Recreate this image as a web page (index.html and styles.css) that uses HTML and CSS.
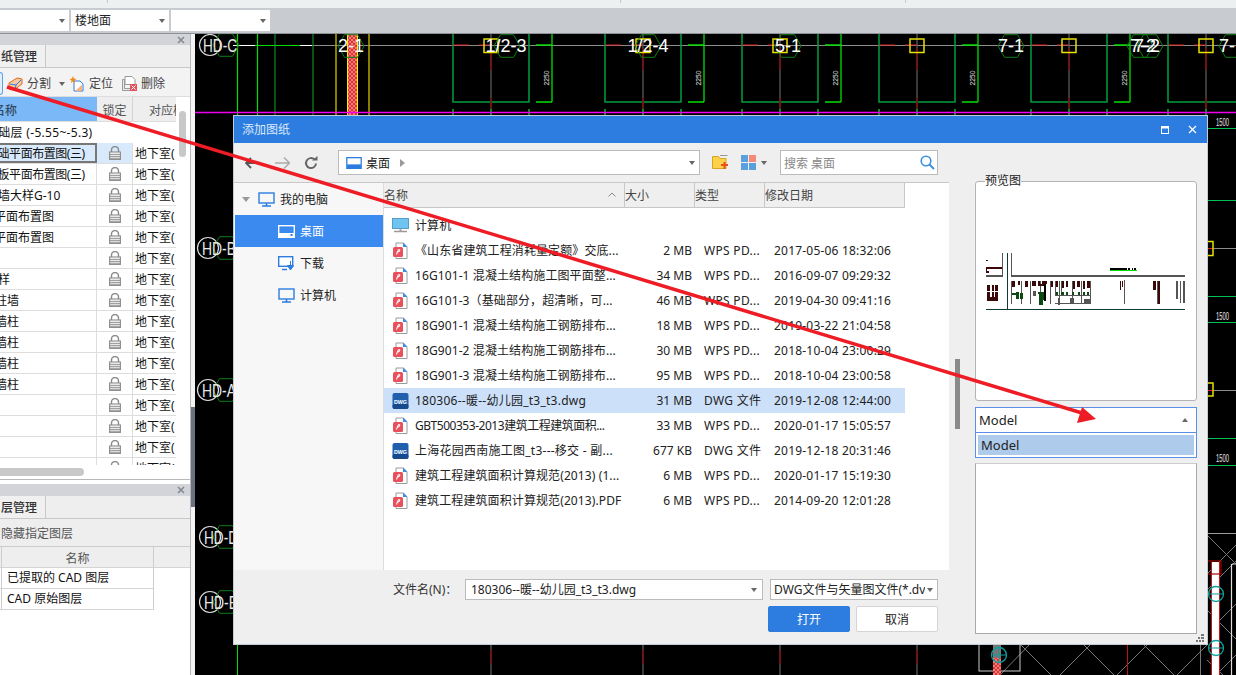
FILE: index.html
```html
<!DOCTYPE html>
<html lang="zh-CN">
<head>
<meta charset="utf-8">
<title>添加图纸</title>
<link rel="stylesheet" href="styles.css">
</head>
<body>
<svg class="defs" width="0" height="0" aria-hidden="true">
  <defs>
    <symbol id="lock" viewBox="0 0 12 14">
      <path d="M2.500 6V4a3.500 3.500 0 0 1 7 0v2" fill="none" stroke="#8a8a8a" stroke-width="1.400"/>
      <rect x=".6" y="6" width="10.800" height="7.400" fill="#fff" stroke="#8a8a8a" stroke-width="1.100"/>
      <path d="M1 8.300h10M1 10.300h10M1 12.200h10" stroke="#8a8a8a" stroke-width="1"/>
    </symbol>
    <symbol id="pdf" viewBox="0 0 16 18">
      <path d="M3.500 1h7.500l3.500 4v11.500h-11z" fill="#fff" stroke="#9a9a9a"/>
      <path d="M10.500 .5l4.500 4.500h-4.500z" fill="#3f8ee0"/>
      <rect x=".5" y="5" width="10" height="10" rx="1.500" fill="#e8505b"/>
      <path d="M4 12.500c1-3 1.500-5 2.500-5s1.500 2-2 3" fill="none" stroke="#fff" stroke-width="1.100"/>
    </symbol>
    <symbol id="dwg" viewBox="0 0 16 16">
      <rect width="16" height="16" rx="2" fill="#1f5fae"/>
      <rect y="11" width="16" height="5" rx="2" fill="#174a8c"/>
      <text x="8" y="10.500" class="dwg-text" text-anchor="middle" textLength="13" lengthAdjust="spacingAndGlyphs">DWG</text>
    </symbol>
    <symbol id="pc" viewBox="0 0 17 15">
      <rect x="1" y="1" width="15" height="10" fill="none" stroke="#2d7de0" stroke-width="1.400"/>
      <path d="M4 14h9M8.500 11v3" stroke="#2d7de0" stroke-width="1.600"/>
    </symbol>
    <symbol id="desk" viewBox="0 0 17 13">
      <rect x=".7" y=".7" width="15.600" height="11.600" fill="none" stroke="currentColor" stroke-width="1.400"/>
      <rect x="1" y="8" width="15" height="4" fill="currentColor"/>
      <rect class="desk-dot" x="12.500" y="9" width="2" height="2"/>
    </symbol>
    <polygon id="hex" points="13,0 6.500,11.300 -6.500,11.300 -13,0 -6.500,-11.300 6.500,-11.300" fill="none" stroke="#0b7d12" stroke-width="1"/>
    <rect id="ysq" x="-7" y="-7" width="14" height="13.500" fill="none" stroke="#e8e000" stroke-width="1.500"/>
    <pattern id="hatch" width="4" height="4" patternUnits="userSpaceOnUse">
      <rect width="4" height="4" fill="#e53030"/>
      <path d="M0 0l4 4M4 0l-4 4" stroke="#f0a0a0" stroke-width=".7"/>
    </pattern>
    <g id="bay">
      <rect x="0" y="-20" width="76" height="88" fill="none" stroke="#00a03c" stroke-width="1.500"/>
      <path d="M38 0v78" stroke="#5a5a5a" stroke-width="1.300"/>
      <path d="M38 14v22M38 64v14" stroke="#8a0000" stroke-width="1.300"/>
      <path d="M0 75v6M38 75v6M76 75v6" stroke="#0a8a20" stroke-width="2"/>
      <path d="M0 11h38" stroke="#e02020" stroke-width="1" stroke-dasharray="16 10"/>
    </g>
    <g id="dim">
      <path d="M0 -11v68M-16 57h16M-16 0h16" stroke="#00e000" stroke-width="1.300" fill="none"/>
      <text class="cad-dim-v" transform="translate(-3,33) rotate(-90)" text-anchor="middle" textLength="15" lengthAdjust="spacingAndGlyphs">2250</text>
    </g>
  </defs>
</svg>

<header class="top-strip"><span class="top-cut">构件图元</span><i class="tick t1"></i><i class="tick t2"></i><i class="tick t3"></i></header>
<div class="selects">
  <div class="sel s1"><span></span><i class="caret"></i></div>
  <div class="sel s2"><span>楼地面</span><i class="caret"></i></div>
  <div class="sel s3"><span></span><i class="caret"></i></div>
</div>

<div class="main">
  <aside class="side">
    <section class="panel panel-a">
      <div class="ptitle"><svg class="x-icon" width="8" height="8" viewBox="0 0 8 8"><path d="M1 1l6 6M7 1l-6 6" stroke="#85898f" stroke-width="1.600"/></svg></div>
      <div class="ptabs"><div class="ptab">纸管理</div></div>
      <div class="ptools">
        <span class="sel-edge"></span>
        <svg class="tool-ic" width="16" height="16" viewBox="0 0 16 16"><path d="M1 7l8-5 5 1v5l-8 6-5-1z" fill="#f7c9a0" stroke="#e06a1c"/><path d="M2 8l6 1 5-5M8 9l-1 5" fill="none" stroke="#2d7de0"/></svg>
        <span class="tool-t">分割</span><i class="caret tool-caret"></i>
        <svg class="tool-ic ic2" width="15" height="16" viewBox="0 0 15 16"><path d="M4 5h6l3 3v7H4z" fill="#fff" stroke="#2d7de0"/><path d="M5 15l7-6v6z" fill="#f7b27a"/><path d="M3 0l1 2.500 2.500 .5-2 1.500.5 2.500-2-1.500-2 1.500.5-2.500-2-1.500 2.500-.5z" fill="#f08a1d"/></svg>
        <span class="tool-t">定位</span>
        <svg class="tool-ic ic3" width="15" height="15" viewBox="0 0 15 15"><path d="M.5 3.500h2v9h8v2H.5z" fill="#e8e8e8" stroke="#9a9a9a"/><path d="M3 .5h7l3 3v5H3z" fill="#fff" stroke="#9a9a9a"/><rect x="8" y="8" width="7" height="7" fill="#e2525b"/><path d="M9.500 9.500l4 4M13.500 9.500l-4 4" stroke="#fff"/></svg>
        <span class="tool-t">删除</span>
      </div>
      <div class="dhead">
        <div class="dh name"><span class="n7">名称</span></div>
        <div class="dh lockh">锁定</div>
        <div class="dh corr">对应楼层</div>
      </div>
      <div class="dtable">
        <div class="drow plain"><div class="dname wide"><span class="n14 loose">基础层 (-5.55~-5.3)</span></div></div>
        <div class="drow on"><div class="dname"><span class="n14 tight">基础平面布置图(三)</span></div><div class="dlock"><svg width="12" height="14"><use href="#lock"/></svg></div><div class="dcorr">地下室(</div></div>
        <div class="drow"><div class="dname"><span class="n14 tight">底板平面布置图(三)</span></div><div class="dlock"><svg width="12" height="14"><use href="#lock"/></svg></div><div class="dcorr">地下室(</div></div>
        <div class="drow"><div class="dname"><span class="n14">剪墙大样G-10</span></div><div class="dlock"><svg width="12" height="14"><use href="#lock"/></svg></div><div class="dcorr">地下室(</div></div>
        <div class="drow"><div class="dname"><span class="n6">平面布置图</span></div><div class="dlock"><svg width="12" height="14"><use href="#lock"/></svg></div><div class="dcorr">地下室(</div></div>
        <div class="drow"><div class="dname"><span class="n6">平面布置图</span></div><div class="dlock"><svg width="12" height="14"><use href="#lock"/></svg></div><div class="dcorr">地下室(</div></div>
        <div class="drow"><div class="dname"></div><div class="dlock"><svg width="12" height="14"><use href="#lock"/></svg></div><div class="dcorr">地下室(</div></div>
        <div class="drow"><div class="dname"><span class="n14">大样</span></div><div class="dlock"><svg width="12" height="14"><use href="#lock"/></svg></div><div class="dcorr">地下室(</div></div>
        <div class="drow"><div class="dname"><span class="n5">柱墙</span></div><div class="dlock"><svg width="12" height="14"><use href="#lock"/></svg></div><div class="dcorr">地下室(</div></div>
        <div class="drow"><div class="dname"><span class="n5">墙柱</span></div><div class="dlock"><svg width="12" height="14"><use href="#lock"/></svg></div><div class="dcorr">地下室(</div></div>
        <div class="drow"><div class="dname"><span class="n5">墙柱</span></div><div class="dlock"><svg width="12" height="14"><use href="#lock"/></svg></div><div class="dcorr">地下室(</div></div>
        <div class="drow"><div class="dname"><span class="n5">墙柱</span></div><div class="dlock"><svg width="12" height="14"><use href="#lock"/></svg></div><div class="dcorr">地下室(</div></div>
        <div class="drow"><div class="dname"><span class="n5">墙柱</span></div><div class="dlock"><svg width="12" height="14"><use href="#lock"/></svg></div><div class="dcorr">地下室(</div></div>
        <div class="drow"><div class="dname"></div><div class="dlock"><svg width="12" height="14"><use href="#lock"/></svg></div><div class="dcorr">地下室(</div></div>
        <div class="drow"><div class="dname"></div><div class="dlock"><svg width="12" height="14"><use href="#lock"/></svg></div><div class="dcorr">地下室(</div></div>
        <div class="drow"><div class="dname"></div><div class="dlock"><svg width="12" height="14"><use href="#lock"/></svg></div><div class="dcorr">地下室(</div></div>
        <div class="drow"><div class="dname"></div><div class="dlock"><svg width="12" height="14"><use href="#lock"/></svg></div><div class="dcorr">地下室(</div></div>
      </div>
      <div class="vthumb"></div>
      <div class="hscroll"><div class="hthumb"></div></div>
    </section>
    <section class="panel panel-b">
      <div class="ptitle tall"><svg class="x-icon" width="8" height="8" viewBox="0 0 8 8"><path d="M1 1l6 6M7 1l-6 6" stroke="#85898f" stroke-width="1.600"/></svg></div>
      <div class="ptabs"><div class="ptab">层管理</div></div>
      <div class="ptools2">隐藏指定图层</div>
      <div class="lhead"><div class="lgut"></div><div class="lname">名称</div></div>
      <div class="lrow"><div class="lgut"></div><div class="lcell">已提取的 CAD 图层</div></div>
      <div class="lrow"><div class="lgut"></div><div class="lcell">CAD 原始图层</div></div>
    </section>
  </aside>
  <div class="gutter"><div class="gutter-dark"></div></div>
  <div class="canvas">
    <svg class="cad" width="1041" height="641" viewBox="195 34 1041 641">
      <rect x="195" y="33" width="1041" height="642" fill="#000"/>
      <path d="M300 45.500H1236" stroke="#8c8c8c"/>
      <path d="M233 45.500h22M300 45.500h12" stroke="#fff" stroke-width="1.200"/>
      <path d="M255 45.500h45" stroke="#00e000"/>
      <path d="M237.500 34v82M257.500 34v82" stroke="#00e000" stroke-width="1.200"/>
      <path d="M275 34v82M313 34v82" stroke="#0a8a20" stroke-width="1.200"/>
      <path d="M336 34v82M369 34v82" stroke="#b8a800" stroke-width="1.500"/>
      <rect x="348" y="34" width="9" height="82" fill="url(#hatch)"/>
      <path d="M347.500 34v82M357.500 34v82" stroke="#fff000" stroke-width="1"/>
      <use href="#bay" x="453" y="34"/><use href="#bay" x="605" y="34"/>
      <use href="#bay" x="742" y="34"/><use href="#bay" x="879" y="34"/>
      <use href="#bay" x="1031" y="34"/><use href="#bay" x="1168" y="34"/>
      <use href="#dim" x="552" y="45"/><use href="#dim" x="704" y="45"/>
      <use href="#dim" x="841" y="45"/><use href="#dim" x="978" y="45"/><use href="#dim" x="1130" y="45"/>
      <path d="M195 112.500H1236" stroke="#f000f0" stroke-width="1.300"/>

      <use href="#ysq" x="491" y="46"/><use href="#ysq" x="643" y="46"/>
      <use href="#ysq" x="780" y="46"/><use href="#ysq" x="917" y="46"/>
      <use href="#ysq" x="1069" y="46"/><use href="#ysq" x="1206" y="46"/>
      <use href="#hex" x="351" y="46"/><use href="#hex" x="507" y="46"/><use href="#hex" x="648" y="46"/>
      <use href="#hex" x="788" y="46"/><use href="#hex" x="1011" y="46"/>
      <use href="#hex" x="1140" y="46"/><use href="#hex" x="1150" y="46"/><use href="#hex" x="1232" y="46"/>
      <text class="cad-label" x="351" y="52" text-anchor="middle">2-1</text>
      <text class="cad-label" x="506" y="52" text-anchor="middle">1/2-3</text>
      <text class="cad-label" x="648" y="52" text-anchor="middle">1/2-4</text>
      <text class="cad-label" x="788" y="52" text-anchor="middle">5-1</text>
      <text class="cad-label" x="1011" y="52" text-anchor="middle">7-1</text>
      <text class="cad-label" x="1143" y="52" text-anchor="middle">7-2</text>
      <text class="cad-label" x="1147" y="52" text-anchor="middle">7-2</text>
      <text class="cad-label" x="1219" y="52">7-</text>

      <circle cx="210" cy="45" r="10.500" fill="none" stroke="#ddd" stroke-width="1.200"/><use href="#hex" x="226" y="45"/>
      <text class="cad-axis" x="203" y="52" textLength="34" lengthAdjust="spacingAndGlyphs">HD-C</text>
      <circle cx="208" cy="248" r="10.500" fill="none" stroke="#ddd" stroke-width="1.200"/><use href="#hex" x="226" y="248"/>
      <text class="cad-axis" x="202" y="255" textLength="34" lengthAdjust="spacingAndGlyphs">HD-B</text>
      <circle cx="208" cy="390" r="10.500" fill="none" stroke="#ddd" stroke-width="1.200"/><use href="#hex" x="226" y="390"/>
      <text class="cad-axis" x="202" y="397" textLength="34" lengthAdjust="spacingAndGlyphs">HD-A</text>
      <circle cx="210" cy="537" r="10.500" fill="none" stroke="#ddd" stroke-width="1.200"/><use href="#hex" x="226" y="537"/>
      <text class="cad-axis" x="204" y="544" textLength="34" lengthAdjust="spacingAndGlyphs">HD-D</text>
      <circle cx="210" cy="602" r="10.500" fill="none" stroke="#ddd" stroke-width="1.200"/><use href="#hex" x="226" y="602"/>
      <text class="cad-axis" x="204" y="609" textLength="34" lengthAdjust="spacingAndGlyphs">HD-E</text>
      <path d="M237.500 640v35" stroke="#00e000"/>

      <path d="M491 640v35M643 640v35M780 640v35M917 640v35" stroke="#5a5a5a" stroke-width="1.300"/>
      <path d="M491 650v14M643 650v14M780 650v14M917 650v14" stroke="#8a0000" stroke-width="1.300"/>

      <path d="M1207 128.500h29M1207 200.500h29M1207 296.500h29M1207 322.500h29M1207 438.500h29M1207 465.500h29" stroke="#00c050" stroke-width="1.200"/>
      <text class="cad-dim" x="1216" y="126" textLength="13" lengthAdjust="spacingAndGlyphs">1500</text>
      <text class="cad-dim" x="1216" y="320" textLength="13" lengthAdjust="spacingAndGlyphs">1500</text>
      <text class="cad-dim" x="1216" y="462" textLength="13" lengthAdjust="spacingAndGlyphs">1500</text>
      <path d="M1207 248.500h29M1207 390.500h29" stroke="#8c8c8c"/>
      <path d="M1207 248.500h7M1207 390.500h7" stroke="#e02020"/>
      <rect x="1200" y="241.500" width="13" height="14" fill="none" stroke="#e8e000" stroke-width="1.500"/>
      <rect x="1200" y="383" width="13" height="13" fill="none" stroke="#e8e000" stroke-width="1.500"/>
      <path d="M1207 533.500h29" stroke="#9a9a9a"/>
      <path d="M1207 535l29 29M1236 545l-29 29M1207 590l29-29M1220 620l16-16M1207 610l29 29M1207 660l16 15M1236 655l-20 20" stroke="#777"/>
      <path d="M1000 675l30-31M1020 644l31 31M1060 675l31-31M1083 644l31 31M1117 675l31-31M1143 644l31 31M1177 675l30-30" stroke="#777"/>
      <path d="M1127.500 644v31" stroke="#c01010"/>
      <path d="M1200.500 644v31" stroke="#777"/>
      <rect x="979" y="640" width="41" height="31" fill="none" stroke="#ccc"/>
      <rect x="993" y="640" width="8" height="35" fill="#777"/>
      <rect x="993" y="658" width="8" height="17" fill="url(#hatch)"/>
      <circle cx="999" cy="655" r="7.500" fill="none" stroke="#10a0a0" stroke-width="1.300"/>
      <path d="M991.500 655h15M999 647.500v15" stroke="#10a0a0"/>
      <rect x="1212" y="562" width="7" height="113" fill="#fff"/>
      <path d="M1211.500 562v113M1219.500 562v113" stroke="#d01010" stroke-width="1"/>
      <rect x="1207" y="561" width="14" height="13" fill="none" stroke="#a00000" stroke-width="1.200"/>
      <path d="M1232 564h4M1231.500 564v111" stroke="#ddd" stroke-width="1.200"/>
      <circle cx="1216" cy="594" r="7.500" fill="none" stroke="#10a0a0" stroke-width="1.300"/>
      <path d="M1208.500 594h15" stroke="#10a0a0"/>
      <circle cx="1216" cy="648" r="7.500" fill="none" stroke="#10a0a0" stroke-width="1.300"/>
      <path d="M1208.500 648h15" stroke="#10a0a0"/>
    </svg>
  </div>
</div>

<div class="dialog">
  <div class="dlg-title">
    <span class="dlg-name">添加图纸</span>
    <svg class="dlg-max" width="8" height="8" viewBox="0 0 8 8"><rect x=".5" y=".5" width="7" height="7" fill="none" stroke="#fff"/><path d="M0 1.500h8" stroke="#fff" stroke-width="2"/></svg>
    <svg class="dlg-close" width="9" height="9" viewBox="0 0 9 9"><path d="M1 1l7 7M8 1l-7 7" stroke="#fff" stroke-width="1.300"/></svg>
  </div>
  <div class="dlg-body">
    <div class="dlg-main">
      <div class="nav">
        <svg class="nav-back" width="12" height="12" viewBox="0 0 12 12"><path d="M6 1L1 6l5 5M1 6h11" fill="none" stroke="#555" stroke-width="1.800"/></svg>
        <svg class="nav-fwd" width="15" height="12" viewBox="0 0 15 12"><path d="M9 .5L14.500 6 9 11.500M0 6h14" fill="none" stroke="#aaa" stroke-width="1.500"/></svg>
        <svg class="nav-ref" width="14" height="14" viewBox="0 0 14 14"><path d="M12 7.500A5 5 0 1 1 10.500 3.500" fill="none" stroke="#666" stroke-width="2"/><path d="M8 4.500h5.500V0z" fill="#666"/></svg>
        <div class="addr">
          <svg class="addr-ic" width="16" height="12"><use href="#desk"/></svg>
          <span>桌面</span><i class="tri-r"></i><i class="caret addr-caret"></i>
        </div>
        <svg class="nf" width="16" height="15" viewBox="0 0 16 15"><path d="M.5 1.500h6l1.500 2h6v10H.5z" fill="#fbd24a" stroke="#d9a520"/><path d="M8 .5h7.500" stroke="#999"/><path d="M9 10h7M12.500 7v7" stroke="#e8501c" stroke-width="2"/></svg>
        <svg class="vw" width="15" height="15" viewBox="0 0 15 15"><rect width="7" height="7" fill="#5aa0dc"/><rect x="8" width="7" height="7" fill="#f48a78"/><rect y="8" width="7" height="7" fill="#5aa0dc"/><rect x="8" y="8" width="7" height="7" fill="#5aa0dc"/></svg>
        <i class="caret vw-caret"></i>
        <div class="search"><span>搜索 桌面</span>
          <svg width="15" height="15" viewBox="0 0 15 15"><circle cx="6" cy="6" r="4.800" fill="none" stroke="#3f8ee0" stroke-width="1.600"/><path d="M9.500 9.500l4.500 4.500" stroke="#3f8ee0" stroke-width="2"/></svg>
        </div>
      </div>
      <div class="browse">
        <nav class="tree">
          <div class="tree-row root"><i class="caret tree-caret"></i><svg class="tree-ic" width="17" height="15"><use href="#pc"/></svg><span>我的电脑</span></div>
          <div class="tree-row sub cur"><svg class="tree-ic" width="17" height="13"><use href="#desk"/></svg><span>桌面</span></div>
          <div class="tree-row sub"><svg class="tree-ic" width="17" height="15" viewBox="0 0 17 15"><rect x=".7" y=".7" width="14" height="9.600" fill="#fff" stroke="#2d7de0" stroke-width="1.400"/><path d="M4 13.500h5" stroke="#2d7de0" stroke-width="1.500"/><path d="M12.500 5v5M9.500 9.500h6L12.500 14z" fill="#2d7de0" stroke="#2d7de0"/></svg><span>下载</span></div>
          <div class="tree-row sub"><svg class="tree-ic" width="17" height="15"><use href="#pc"/></svg><span>计算机</span></div>
        </nav>
        <div class="files">
          <div class="fhead">
            <div class="fh c-name">名称<svg class="sort" width="8" height="5" viewBox="0 0 8 5"><path d="M.5 4.500L4 1l3.500 3.500" fill="none" stroke="#888"/></svg></div>
            <div class="fh c-size">大小</div>
            <div class="fh c-type">类型</div>
            <div class="fh c-date">修改日期</div>
          </div>
          <div class="flist">
            <div class="frow"><svg class="fic" width="17" height="15" viewBox="0 0 17 15"><rect x=".5" y=".5" width="16" height="10" fill="#6fc4f2" stroke="#5a9cc8"/><path d="M8.500 11v2" stroke="#aaa" stroke-width="2"/><path d="M2 13.500h13" stroke="#9a9a9a" stroke-width="1.500"/></svg><span class="f-name">计算机</span></div>
            <div class="frow"><svg class="fic" width="16" height="18"><use href="#pdf"/></svg><span class="f-name">《山东省建筑工程消耗量定额》交底...</span><span class="f-size">2 MB</span><span class="f-type">WPS PD...</span><span class="f-date">2017-05-06 18:32:06</span></div>
            <div class="frow"><svg class="fic" width="16" height="18"><use href="#pdf"/></svg><span class="f-name">16G101-1 混凝土结构施工图平面整...</span><span class="f-size">34 MB</span><span class="f-type">WPS PD...</span><span class="f-date">2016-09-07 09:29:32</span></div>
            <div class="frow"><svg class="fic" width="16" height="18"><use href="#pdf"/></svg><span class="f-name">16G101-3（基础部分，超清晰，可...</span><span class="f-size">46 MB</span><span class="f-type">WPS PD...</span><span class="f-date">2019-04-30 09:41:16</span></div>
            <div class="frow"><svg class="fic" width="16" height="18"><use href="#pdf"/></svg><span class="f-name">18G901-1 混凝土结构施工钢筋排布...</span><span class="f-size">18 MB</span><span class="f-type">WPS PD...</span><span class="f-date">2019-03-22 21:04:58</span></div>
            <div class="frow"><svg class="fic" width="16" height="18"><use href="#pdf"/></svg><span class="f-name">18G901-2 混凝土结构施工钢筋排布...</span><span class="f-size">30 MB</span><span class="f-type">WPS PD...</span><span class="f-date">2018-10-04 23:00:29</span></div>
            <div class="frow"><svg class="fic" width="16" height="18"><use href="#pdf"/></svg><span class="f-name">18G901-3 混凝土结构施工钢筋排布...</span><span class="f-size">95 MB</span><span class="f-type">WPS PD...</span><span class="f-date">2018-10-04 23:00:58</span></div>
            <div class="frow sel-row"><svg class="fic" width="16" height="16"><use href="#dwg"/></svg><span class="f-name wider">180306--暖--幼儿园_t3_t3.dwg</span><span class="f-size">31 MB</span><span class="f-type">DWG 文件</span><span class="f-date">2019-12-08 12:44:00</span></div>
            <div class="frow"><svg class="fic" width="16" height="18"><use href="#pdf"/></svg><span class="f-name narrower">GBT500353-2013建筑工程建筑面积...</span><span class="f-size">33 MB</span><span class="f-type">WPS PD...</span><span class="f-date">2020-01-17 15:05:57</span></div>
            <div class="frow"><svg class="fic" width="16" height="16"><use href="#dwg"/></svg><span class="f-name wider">上海花园西南施工图_t3---移交 - 副...</span><span class="f-size">677 KB</span><span class="f-type">DWG 文件</span><span class="f-date">2019-12-18 20:31:46</span></div>
            <div class="frow"><svg class="fic" width="16" height="18"><use href="#pdf"/></svg><span class="f-name">建筑工程建筑面积计算规范(2013) (1...</span><span class="f-size">6 MB</span><span class="f-type">WPS PD...</span><span class="f-date">2020-01-17 15:19:30</span></div>
            <div class="frow"><svg class="fic" width="16" height="18"><use href="#pdf"/></svg><span class="f-name">建筑工程建筑面积计算规范(2013).PDF</span><span class="f-size">6 MB</span><span class="f-type">WPS PD...</span><span class="f-date">2014-09-20 12:01:28</span></div>
          </div>
        </div>
      </div>
      <div class="dlg-bottom">
        <div class="b-row">
          <label class="b-label">文件名(N)：</label>
          <div class="b-input"><span>180306--暖--幼儿园_t3_t3.dwg</span><i class="caret"></i></div>
          <div class="b-filter"><span>DWG文件与矢量图文件(*.dv</span><i class="caret"></i></div>
        </div>
        <div class="b-actions">
          <button class="btn primary">打开</button>
          <button class="btn">取消</button>
        </div>
      </div>
    </div>
    <div class="splitter"><div class="handle"></div></div>
    <div class="dlg-right">
      <div class="preview">
        <span class="legend">预览图</span>
        <svg class="pv" width="220" height="218" viewBox="976 182 220 218">
          <g class="pv-gray">
            <rect x="1011" y="275" width="174" height="2"/><rect x="986" y="275" width="17" height="2"/>
            <rect x="1002" y="253" width="1" height="24"/><rect x="1011" y="253" width="1" height="24"/>
            <rect x="1011" y="281" width="1" height="23"/><rect x="1021" y="281" width="1" height="23"/><rect x="1030" y="281" width="1" height="23"/><rect x="1040" y="281" width="1" height="23"/><rect x="1050" y="281" width="1" height="23"/><rect x="1059" y="281" width="1" height="23"/>
            <rect x="1055" y="281" width="1" height="14"/><rect x="1061" y="281" width="1" height="14"/><rect x="1055" y="295" width="35" height="1"/><rect x="1055" y="303" width="35" height="1"/><rect x="1072" y="281" width="1" height="23"/><rect x="1081" y="281" width="1" height="23"/><rect x="1090" y="281" width="1" height="23"/><rect x="1084" y="299" width="7" height="4"/><rect x="1058" y="298" width="2" height="7"/><rect x="1070" y="298" width="4" height="5"/>
            <rect x="1124" y="280" width="1" height="24"/><rect x="1157" y="281" width="1" height="23"/><rect x="1176" y="281" width="2" height="18"/><rect x="1180" y="281" width="1" height="22"/><rect x="1183" y="281" width="2" height="22"/>
            <rect x="1033" y="291" width="3" height="5"/>
          </g>
          <g class="pv-teal"><rect x="1007" y="253" width="1" height="57"/><rect x="986" y="309" width="199" height="1"/></g>
          <g class="pv-red">
            <rect x="986" y="267" width="16" height="2"/><rect x="986" y="267" width="1" height="6"/><rect x="986" y="271" width="3" height="2"/><rect x="986" y="260" width="2" height="1"/>
            <rect x="987" y="285" width="11" height="16"/>
            <rect x="1012" y="281" width="3" height="6"/><rect x="1018" y="281" width="2" height="4"/><rect x="1025" y="281" width="3" height="6"/><rect x="1032" y="281" width="4" height="5"/><rect x="1038" y="281" width="2" height="5"/><rect x="1042" y="281" width="5" height="3"/><rect x="1038" y="284" width="7" height="2"/>
            <rect x="1051" y="281" width="2" height="6"/><rect x="1056" y="281" width="2" height="6"/><rect x="1062" y="281" width="2" height="7"/><rect x="1066" y="281" width="2" height="6"/><rect x="1073" y="281" width="2" height="8"/><rect x="1077" y="281" width="3" height="6"/><rect x="1083" y="281" width="2" height="8"/><rect x="1087" y="281" width="3" height="7"/>
            <rect x="1120" y="281" width="1" height="9"/><rect x="1122" y="281" width="1" height="6"/><rect x="1153" y="281" width="3" height="9"/><rect x="1158" y="281" width="2" height="23"/>
          </g>
          <rect class="pv-w" x="990" y="284" width="2" height="13"/><rect class="pv-w" x="994" y="284" width="1" height="13"/><rect class="pv-w" x="987" y="291" width="11" height="1"/>
          <g class="pv-green">
            <rect x="1012" y="293" width="5" height="2"/><rect x="1016" y="292" width="3" height="7"/><rect x="1020" y="293" width="3" height="6"/><rect x="1039" y="292" width="4" height="13"/><rect x="1042" y="292" width="2" height="8"/><rect x="1038" y="292" width="2" height="2"/>
            <rect x="1056" y="292" width="2" height="3"/><rect x="1061" y="292" width="3" height="3"/><rect x="1066" y="292" width="2" height="3"/><rect x="1072" y="292" width="2" height="3"/><rect x="1078" y="292" width="2" height="3"/><rect x="1083" y="292" width="2" height="3"/><rect x="1087" y="292" width="2" height="3"/>
          </g>
          <rect class="pv-k" x="1044" y="284" width="2" height="17"/><rect class="pv-k" x="1110" y="268" width="17" height="2"/><rect class="pv-k" x="1128" y="268" width="2" height="2"/><rect class="pv-k" x="1132" y="268" width="1" height="2"/><rect class="pv-k" x="1134" y="268" width="2" height="2"/>
          <rect class="pv-lime" x="1110" y="270" width="27" height="1"/>
        </svg>
      </div>
      <div class="m-select"><span>Model</span><i class="caret up"></i></div>
      <div class="m-drop"><div class="m-item">Model</div></div>
      <div class="m-area"></div>
      <svg class="grip" width="8" height="8" viewBox="0 0 8 8"><path d="M5 0h3v2H5zM2 3h2v2H2zM5 3h3v2H5zM0 6h2v2H0zM3 6h2v2H3zM6 6h2v2H6z" fill="#777"/></svg>
    </div>
  </div>
</div>

<svg class="arrow" width="1236" height="675" viewBox="0 0 1236 675">
  <path class="arrow-line" d="M7 87L1082 413"/>
  <polygon class="arrow-head" points="1096,419 1082,407 1077,423"/>
</svg>
</body>
</html>
```

FILE: styles.css
```css
* { box-sizing: border-box; }
html, body { margin: 0; padding: 0; }
body {
  position: relative;
  width: 1236px;
  height: 675px;
  overflow: hidden;
  background: #000;
  color: #222;
  font: 12px/16px "Noto Sans", "Noto Sans CJK SC", sans-serif;
}
i { display: block; font-style: normal; }
.defs { position: absolute; }

.top-strip { position: relative; height: 8px; background: #ecf0f1; overflow: hidden; }
.top-cut { display: block; margin: -13px 0 0 784px; color: #222; letter-spacing: 8px; font-weight: 700; }
.tick { position: absolute; top: 0; width: 1px; height: 3px; background: #c8c8c8; }
.t1 { left: 107px; } .t2 { left: 620px; } .t3 { left: 905px; }

.selects { display: flex; height: 26px; padding: 2px 0 2px 0; background: #c8ccd0; border-bottom: 1px solid #8e9296; gap: 2px; }
.sel { display: flex; align-items: center; justify-content: space-between; height: 21px; background: #fff; padding: 0 4px 0 4px; }
.s1 { width: 69px; } .s2 { width: 98px; } .s3 { width: 99px; }
.caret { width: 0; height: 0; border: 3px solid transparent; border-top: 4px solid #666; border-bottom: 0; flex: none; }
.caret.up { border-top: 0; border-bottom: 4px solid #666; }

.main { display: flex; height: 641px; }
.side { width: 191px; background: #fff; border-right: 1px solid #b4b8bc; flex: none; }
.gutter { width: 4px; background: #f4f4f4; position: relative; flex: none; }
.gutter-dark { position: absolute; left: 0; top: 373px; width: 4px; height: 100px; background: #6a7280; }
.canvas { flex: 1; overflow: hidden; }
.cad { display: block; }
.cad-label { fill: #fff; font: 18px "Liberation Sans", sans-serif; }
.cad-axis { fill: #e8e8e8; font: 18px "Liberation Sans", sans-serif; }
.cad-dim { fill: #e8e8e8; font: 10px "Liberation Sans", sans-serif; }
.cad-dim-v { fill: #e8e8e8; font: 8px "Liberation Sans", sans-serif; }
.dwg-text { fill: #fff; font: 700 6px "Liberation Sans", sans-serif; }
.desk-dot { fill: #2d7de0; }

.panel-a { position: relative; height: 446px; border-bottom: 1px solid #b8b8b8; margin-bottom: 4px; }
.ptitle { height: 11px; background: #d2d4da; display: flex; justify-content: flex-end; align-items: center; padding-right: 5px; }
.ptitle.tall { height: 12px; }
.ptabs { height: 23px; background: #eee; border-bottom: 1px solid #c8c8c8; }
.ptab { width: 46px; height: 22px; padding-left: 1px; line-height: 24px; font-weight: 500; color: #333; border-right: 1px solid #c8c8c8; background: #f0f0f0; overflow: hidden; }
.ptools { display: flex; align-items: center; height: 29px; padding-top: 3px; background: #f3f3f3; border-bottom: 1px solid #ddd; color: #444; }
.sel-edge { width: 3px; height: 23px; background: #e0effc; border: 1px solid #5ba2e6; border-left: 0; border-radius: 0 3px 3px 0; margin-right: 5px; }
.tool-ic { flex: none; }
.tool-t { margin-left: 3px; }
.ic2 + .tool-t, .ic3 + .tool-t { margin-left: 4px; }
.tool-caret { margin: 0 5px 0 8px; }
.ic3 { margin-left: 9px; }

.dhead { display: flex; height: 25px; background: #eee; border-bottom: 1px solid #ddd; width: 176px; }
.dh { line-height: 27px; border-right: 1px solid #d4d4d4; color: #555; text-align: center; overflow: hidden; white-space: nowrap; }
.dh.name { width: 97px; background: #7ab8f7; text-align: left; border-right: 0; color: #33475c; font-weight: 500; }
.dh.lockh { width: 36px; }
.dh.corr { width: 43px; text-align: left; padding-left: 16px; border-right: 0; }
.n7 { margin-left: -7px; display: inline-block; }
.n14 { margin-left: -14px; display: inline-block; }
.n6 { margin-left: -6px; display: inline-block; }
.n5 { margin-left: -5px; display: inline-block; }
.tight { letter-spacing: -.45px; }
.loose { letter-spacing: .3px; }

.dtable { height: 343px; overflow: hidden; }
.drow { display: flex; height: 21px; width: 176px; border-bottom: 1px solid #ddd; line-height: 22px; white-space: nowrap; color: #111; }
.drow.plain { border-bottom: 0; }
.dname { width: 97px; overflow: hidden; border-right: 1px solid #ddd; flex: none; }
.dname.wide { width: 176px; border-right: 0; }
.dlock { width: 36px; border-right: 1px solid #ddd; display: flex; align-items: center; justify-content: center; flex: none; }
.dcorr { width: 43px; padding-left: 2px; overflow: hidden; flex: none; }
.drow.on .dname { border: 2px solid #777; border-left: 0; background: #d8e9fb; line-height: 18px; }
.drow.on .dlock { background: #d8e9fb; }
.vthumb { position: absolute; left: 179px; top: 77px; width: 7px; height: 46px; background: #c8c8c8; border-radius: 4px; }
.hscroll { height: 13px; padding-top: 3px; }
.hthumb { width: 84px; height: 8px; background: #c8c8c8; border-radius: 0 4px 4px 0; }

.ptools2 { height: 28px; line-height: 30px; padding-left: 1px; background: #eee; border-bottom: 1px solid #ccc; color: #555; }
.lhead { display: flex; height: 21px; background: #eee; border-bottom: 1px solid #d4d4d4; }
.lgut { width: 2px; border-right: 1px solid #ccc; flex: none; }
.lname { width: 152px; text-align: center; line-height: 23px; color: #555; border-right: 1px solid #ccc; }
.lrow { display: flex; height: 21px; width: 154px; border-bottom: 1px solid #d4d4d4; }
.lcell { flex: 1; padding-left: 5px; line-height: 20px; border-right: 1px solid #ccc; color: #111; white-space: nowrap; }

.dialog {
  position: absolute; left: 234px; top: 116px; width: 973px; height: 528px;
  background: #efefef; box-shadow: 0 0 0 1px #c5ccd6;
}
.dlg-title { display: flex; align-items: center; height: 27px; background: #2d7de0; color: #dbe9fb; padding-left: 8px; }
.dlg-name { flex: 1; padding-top: 1px; }
.dlg-max { margin-right: 19px; }
.dlg-close { margin-right: 10px; }
.dlg-body { display: flex; height: 501px; position: relative; }
.dlg-main { width: 715px; flex: none; }

.nav { display: flex; align-items: center; height: 39px; padding-left: 11px; }
.nav-fwd { margin-left: 18px; }
.nav-ref { margin-left: 14px; }
.addr { display: flex; align-items: center; width: 362px; height: 25px; margin-left: 20px; background: #fff; border: 1px solid #bbb; padding-left: 7px; color: #222; }
.addr span { padding-top: 2px; }
.addr-ic { color: #2d7de0; margin-right: 4px; }
.tri-r { width: 0; height: 0; margin-left: 10px; border: 4px solid transparent; border-left: 5px solid #999; border-right: 0; }
.addr-caret { margin-left: auto; margin-right: 4px; }
.nf { margin-left: 12px; }
.vw { margin-left: 13px; }
.vw-caret { margin-left: 5px; }
.search { display: flex; align-items: center; justify-content: space-between; width: 158px; height: 25px; margin-left: 13px; background: #fff; border: 1px solid #bbb; padding: 0 2px 0 3px; color: #888; }
.search span { padding-top: 2px; }

.browse { display: flex; height: 388px; border-top: 1px solid #c8c8c8; }
.tree { width: 150px; background: #f7f7f7; border-right: 1px solid #ddd; flex: none; padding-top: 0; }
.tree-row { display: flex; align-items: center; height: 32px; color: #222; }
.tree-row span { padding-top: 2px; }
.tree-row .tree-ic { color: #2d7de0; margin-right: 5px; flex: none; }
.tree-row.root { padding-left: 8px; }
.tree-caret { border-width: 4px; border-top-width: 5px; border-top-color: #999; margin-right: 8px; }
.tree-row.sub { padding-left: 44px; }
.tree-row.cur { margin-left: 1px; padding-left: 43px; background: #3a8af0; color: #fff; }
.tree-row.cur .tree-ic { color: #fff; }

.files { flex: 1; background: #fff; }
.fhead { display: flex; width: 521px; height: 25px; background: #efefef; border-bottom: 1px solid #c8c8c8; line-height: 26px; color: #444; border-right: 1px solid #c8c8c8; }
.fh { flex: none; border-right: 1px solid #c8c8c8; position: relative; }
.c-name { width: 241px; }
.c-size { width: 70px; }
.c-type { width: 70px; }
.c-date { width: 139px; border-right: 0; }
.sort { position: absolute; right: 8px; top: 9px; }
.flist { padding-top: 5px; width: 521px; }
.frow { display: flex; align-items: center; height: 25px; padding-left: 8px; white-space: nowrap; color: #222; }
.sel-row { background: #cce0fa; }
.fic { flex: none; width: 17px; margin-right: 6px; }
.f-name { width: 208px; flex: none; overflow: hidden; letter-spacing: .1px; }
.f-name.wider { letter-spacing: .25px; }
.f-name.narrower { letter-spacing: -.47px; }
.f-size { width: 69px; text-align: right; flex: none; }
.f-type { width: 82px; padding-left: 12px; flex: none; letter-spacing: .3px; }
.f-date { flex: none; letter-spacing: .2px; }

.dlg-bottom { padding: 9px 11px 0 159px; }
.b-row { display: flex; height: 21px; align-items: stretch; }
.b-label { width: 72px; line-height: 21px; color: #333; white-space: nowrap; }
.b-input, .b-filter { display: flex; align-items: center; justify-content: space-between; background: #fff; border: 1px solid #bbb; white-space: nowrap; overflow: hidden; }
.b-input { width: 298px; padding: 0 5px; }
.b-filter { width: 168px; margin-left: 7px; padding: 0 4px 0 3px; }
.b-filter span { overflow: hidden; }
.b-actions { display: flex; justify-content: flex-end; gap: 6px; margin-top: 6px; }
.btn { width: 82px; height: 26px; background: #fff; border: 1px solid #d4d4d4; border-radius: 2px; font: inherit; color: #222; padding: 2px 0 0; }
.btn.primary { background: #2d7de0; border-color: #2d7de0; color: #fff; }

.splitter { width: 26px; flex: none; display: flex; align-items: center; }
.handle { width: 5px; height: 70px; margin-left: 6px; background: #8a8a8a; }
.dlg-right { width: 222px; flex: none; padding-top: 38px; }
.preview { position: relative; height: 220px; background: #fff; border: 1px solid #b4b4b4; border-radius: 3px; }
.legend { position: absolute; left: 9px; top: -8px; background: linear-gradient(#efefef 50%, #fff 50%); line-height: 14px; }
.pv { display: block; }
.pv-gray { fill: #555; }
.pv-teal { fill: #0c3a35; }
.pv-red { fill: #3a0808; }
.pv-green { fill: #0b4a12; }
.pv-k { fill: #000; }
.pv-lime { fill: #00e000; }
.pv-w { fill: #fff; }
.m-select { display: flex; align-items: center; justify-content: space-between; height: 26px; margin-top: 6px; background: #fff; border: 1px solid #5b8ee6; padding: 0 8px 0 3px; font-size: 13px; color: #222; }
.m-drop { height: 25px; background: #fff; border: 1px solid #5b8ee6; border-top: 0; padding: 2px; }
.m-item { height: 20px; line-height: 20px; background: #aecbec; padding-left: 3px; font-size: 13px; color: #222; }
.m-area { height: 171px; margin-top: 5px; background: #fff; border: 1px solid #aaa; border-top-color: #ccc; }
.grip { position: absolute; right: 3px; bottom: 2px; }

.arrow { position: absolute; left: 0; top: 0; pointer-events: none; }
.arrow-line { stroke: #ee1c25; stroke-width: 3.500; fill: none; }
.arrow-head { fill: #ee1c25; }
```
